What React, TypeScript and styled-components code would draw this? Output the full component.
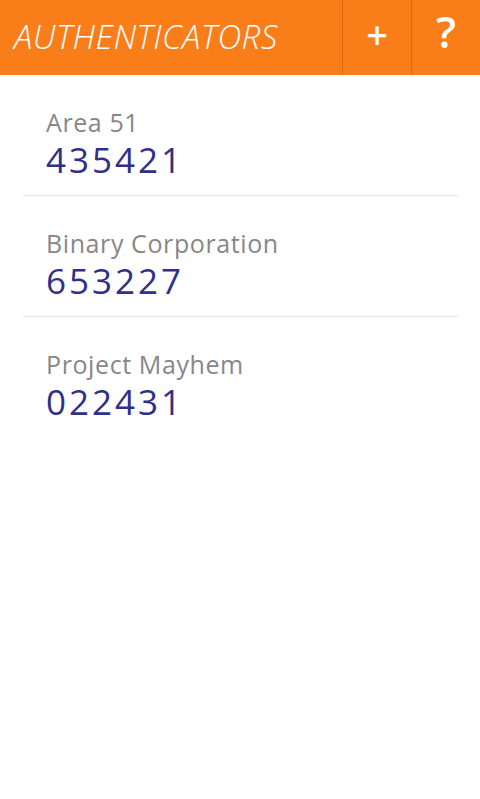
import styled, { createGlobalStyle } from 'styled-components'

type Account = {
  name: string
  code: string
}

const accounts: Account[] = [
  { name: 'Area 51', code: '435421' },
  { name: 'Binary Corporation', code: '653227' },
  { name: 'Project Mayhem', code: '022431' },
]

const GlobalStyle = createGlobalStyle`
  html, body {
    margin: 0;
    padding: 0;
    background: #fff;
  }
  body {
    font-family: 'Open Sans', 'Noto Sans', sans-serif;
  }
`

const Header = styled.header`
  display: flex;
  align-items: stretch;
  height: 75px;
  background: #f97e1a;
  color: #fff;
`

const Title = styled.h1`
  flex: 1;
  margin: 0;
  padding: 0 0 2px 14px;
  display: flex;
  align-items: center;
  font-size: 33px;
  font-weight: 300;
  font-style: italic;
  letter-spacing: 0.5px;
`

const HeaderButton = styled.button<{ $size: number; $weight: number; $lift: number }>`
  width: 69px;
  border: 0;
  border-left: 1px solid #d86a12;
  background: transparent;
  color: #fff;
  font-family: 'Open Sans', sans-serif;
  font-size: ${({ $size }) => $size}px;
  font-weight: ${({ $weight }) => $weight};
  line-height: 1;
  display: flex;
  align-items: center;
  justify-content: center;
  padding: 0 0 ${({ $lift }) => $lift}px;
`

const List = styled.ul`
  list-style: none;
  margin: 0;
  padding: 0 22px 0 23px;
`

const Row = styled.li`
  height: 121px;
  padding: 31px 0 0 23px;
  box-sizing: border-box;
  border-bottom: 1px solid #e6e6e6;

  &:last-child {
    border-bottom: 0;
  }
`

const Name = styled.div`
  color: #878787;
  font-size: 25px;
  line-height: 32px;
  letter-spacing: 0.6px;
`

const Code = styled.div`
  color: #2f3089;
  font-size: 35px;
  line-height: 44px;
  letter-spacing: 3px;
`

export default function App() {
  return (
    <>
      <GlobalStyle />
      <Header>
        <Title>AUTHENTICATORS</Title>
        <HeaderButton aria-label="Add" $size={38} $weight={600} $lift={8}>
          +
        </HeaderButton>
        <HeaderButton aria-label="Help" $size={44} $weight={600} $lift={14}>
          ?
        </HeaderButton>
      </Header>
      <List>
        {accounts.map((a) => (
          <Row key={a.name}>
            <Name>{a.name}</Name>
            <Code>{a.code}</Code>
          </Row>
        ))}
      </List>
    </>
  )
}
